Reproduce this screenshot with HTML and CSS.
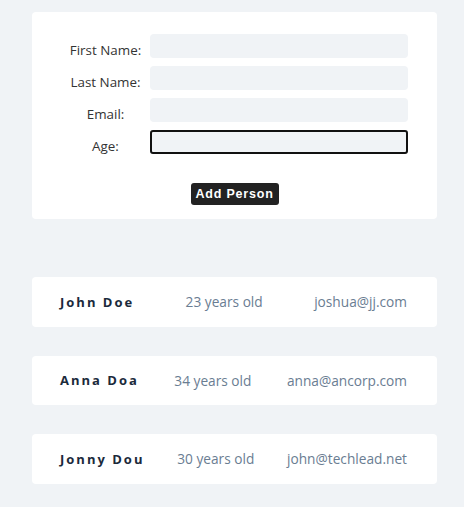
FILE: index.html
```html
<!DOCTYPE html>
<html>
<head>
<meta charset="utf-8">
<link rel="stylesheet" href="styles.css">
</head>
<body>
<div class="page">
  <form class="form-card">
    <div class="fields">
      <label class="label" for="fn">First Name:</label>
      <input class="input" id="fn" type="text">
      <label class="label" for="ln">Last Name:</label>
      <input class="input" id="ln" type="text">
      <label class="label" for="em">Email:</label>
      <input class="input" id="em" type="text">
      <label class="label" for="ag">Age:</label>
      <input class="input input-focus" id="ag" type="text">
    </div>
    <div class="actions">
      <button class="btn" type="button">Add Person</button>
    </div>
  </form>

  <div class="people">
    <div class="person">
      <span class="name">John Doe</span>
      <span class="meta">23 years old</span>
      <span class="meta">joshua@jj.com</span>
    </div>
    <div class="person">
      <span class="name">Anna Doa</span>
      <span class="meta">34 years old</span>
      <span class="meta">anna@ancorp.com</span>
    </div>
    <div class="person">
      <span class="name">Jonny Dou</span>
      <span class="meta">30 years old</span>
      <span class="meta">john@techlead.net</span>
    </div>
  </div>
</div>
</body>
</html>
```
FILE: styles.css
```css
* { box-sizing: border-box; }
html, body {
  margin: 0;
  padding: 0;
  background: #f0f3f6;
}
body {
  font-family: "Open Sans", "Noto Sans", sans-serif;
  color: #333;
}
.page {
  width: 405px;
  margin-left: 32px;
  padding-top: 12px;
}
.form-card {
  background: #fff;
  border-radius: 4px;
  padding: 22px 29px 14px 29px;
  margin: 0;
}
.fields {
  display: grid;
  grid-template-columns: 73px 1fr;
  column-gap: 8px;
  row-gap: 8px;
  margin-left: 8px;
}
.label {
  text-align: center;
  font-size: 13.4px;
  line-height: 16px;
  padding-top: 8px;
  color: #333;
}
.input {
  height: 24px;
  border: none;
  border-radius: 4px;
  background: #f0f3f6;
  outline: none;
  margin: 0;
  font: inherit;
}
.input-focus {
  border: 2px solid #111;
  border-radius: 3px;
}
.actions {
  display: flex;
  justify-content: center;
  padding-top: 29px;
}
.btn {
  width: 88px;
  height: 22px;
  background: #222;
  color: #fff;
  border: none;
  border-radius: 3px;
  font-family: "Liberation Sans", Arial, sans-serif;
  font-weight: bold;
  font-size: 12.5px;
  letter-spacing: 0.8px;
  padding: 0;
}
.people {
  display: flex;
  flex-direction: column;
  gap: 29px;
  margin-top: 58px;
}
.person {
  height: 49.5px;
  background: #fff;
  border-radius: 4px;
  display: flex;
  align-items: center;
  justify-content: space-between;
  padding: 0 30px 0 28px;
}
.name {
  font-weight: bold;
  font-size: 13px;
  letter-spacing: 2px;
  color: #1b2a3b;
}
.meta {
  font-size: 13.7px;
  color: #6a7d92;
}
```
